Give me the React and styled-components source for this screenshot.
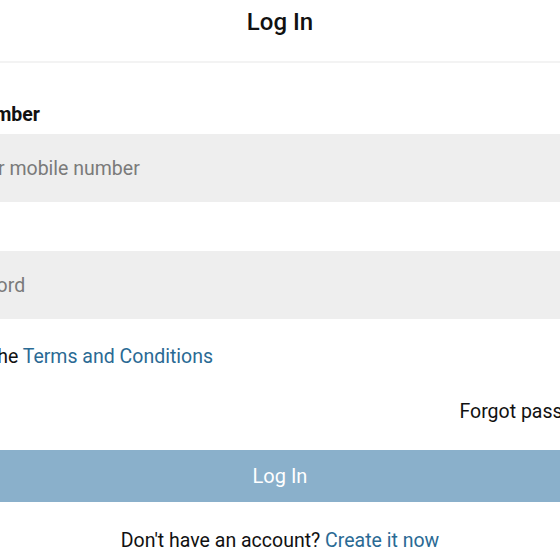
import styled, { createGlobalStyle } from "styled-components"
import { Lock } from "lucide-react"

const GlobalStyle = createGlobalStyle`
    html, body {
        margin: 0;
        padding: 0;
        background: #ffffff;
        overflow: hidden;
    }
    body {
        font-family: Roboto, "Noto Sans", sans-serif;
        color: #111111;
    }
`

const Page = styled.div`
    width: 560px;
    display: flex;
    flex-direction: column;
    align-items: center;
`

const Header = styled.header`
    align-self: stretch;
    height: 61px;
    border-bottom: 2px solid #f3f3f3;
    display: flex;
    justify-content: center;
`

const Title = styled.h1`
    margin: 0;
    font-size: 24px;
    font-weight: 500;
    line-height: 45px;
`

const Form = styled.form`
    width: 750px;
    flex-shrink: 0;
    display: flex;
    flex-direction: column;
    padding-top: 40px;
`

const Label = styled.label`
    font-size: 19.5px;
    font-weight: 700;
    line-height: 24px;
    margin-bottom: 7px;
`

const Field = styled.div`
    height: 68px;
    background: #eeeeee;
    display: flex;
    align-items: center;
    gap: 6px;
    padding-left: 12px;
    margin-bottom: ${props => props.$space}px;
    color: #7a7a7a;
`

const Input = styled.input`
    flex: 1;
    height: 100%;
    border: none;
    outline: none;
    background: transparent;
    padding: 0;
    font-family: inherit;
    font-size: 19.5px;
    color: #222222;

    &::placeholder {
        color: #7a7a7a;
    }
`

const Terms = styled.p`
    margin: 0;
    font-size: 19.5px;
    line-height: 24px;
    padding-top: 26px;
`

const Link = styled.a`
    color: #2a6a94;
    text-decoration: none;
`

const Forgot = styled.a`
    align-self: flex-end;
    margin: 31px 40px 0 0;
    font-size: 19.5px;
    line-height: 24px;
    color: #111111;
    text-decoration: none;
`

const Submit = styled.button`
    margin-top: 26px;
    height: 52px;
    border: none;
    background: #8ab0cb;
    color: #ffffff;
    font-family: inherit;
    font-size: 20px;
    cursor: pointer;
`

const Signup = styled.p`
    margin: 27px 0 0;
    text-align: center;
    font-size: 19.5px;
    line-height: 24px;
`

const App = () => {
    return (
        <>
            <GlobalStyle />
            <Page>
                <Header>
                    <Title>Log In</Title>
                </Header>
                <Form onSubmit={e => e.preventDefault()}>
                    <Label htmlFor="mobile">Mobile Number</Label>
                    <Field $space={49}>
                        <Input id="mobile" placeholder="Enter your mobile number" />
                    </Field>
                    <Field $space={0}>
                        <Lock size={16} />
                        <Input type="password" placeholder="Password" />
                    </Field>
                    <Terms>
                        I agree to the <Link href="#">Terms and Conditions</Link>
                    </Terms>
                    <Forgot href="#">Forgot password?</Forgot>
                    <Submit type="submit">Log In</Submit>
                    <Signup>
                        Don't have an account? <Link href="#">Create it now</Link>
                    </Signup>
                </Form>
            </Page>
        </>
    )
}

export default App
